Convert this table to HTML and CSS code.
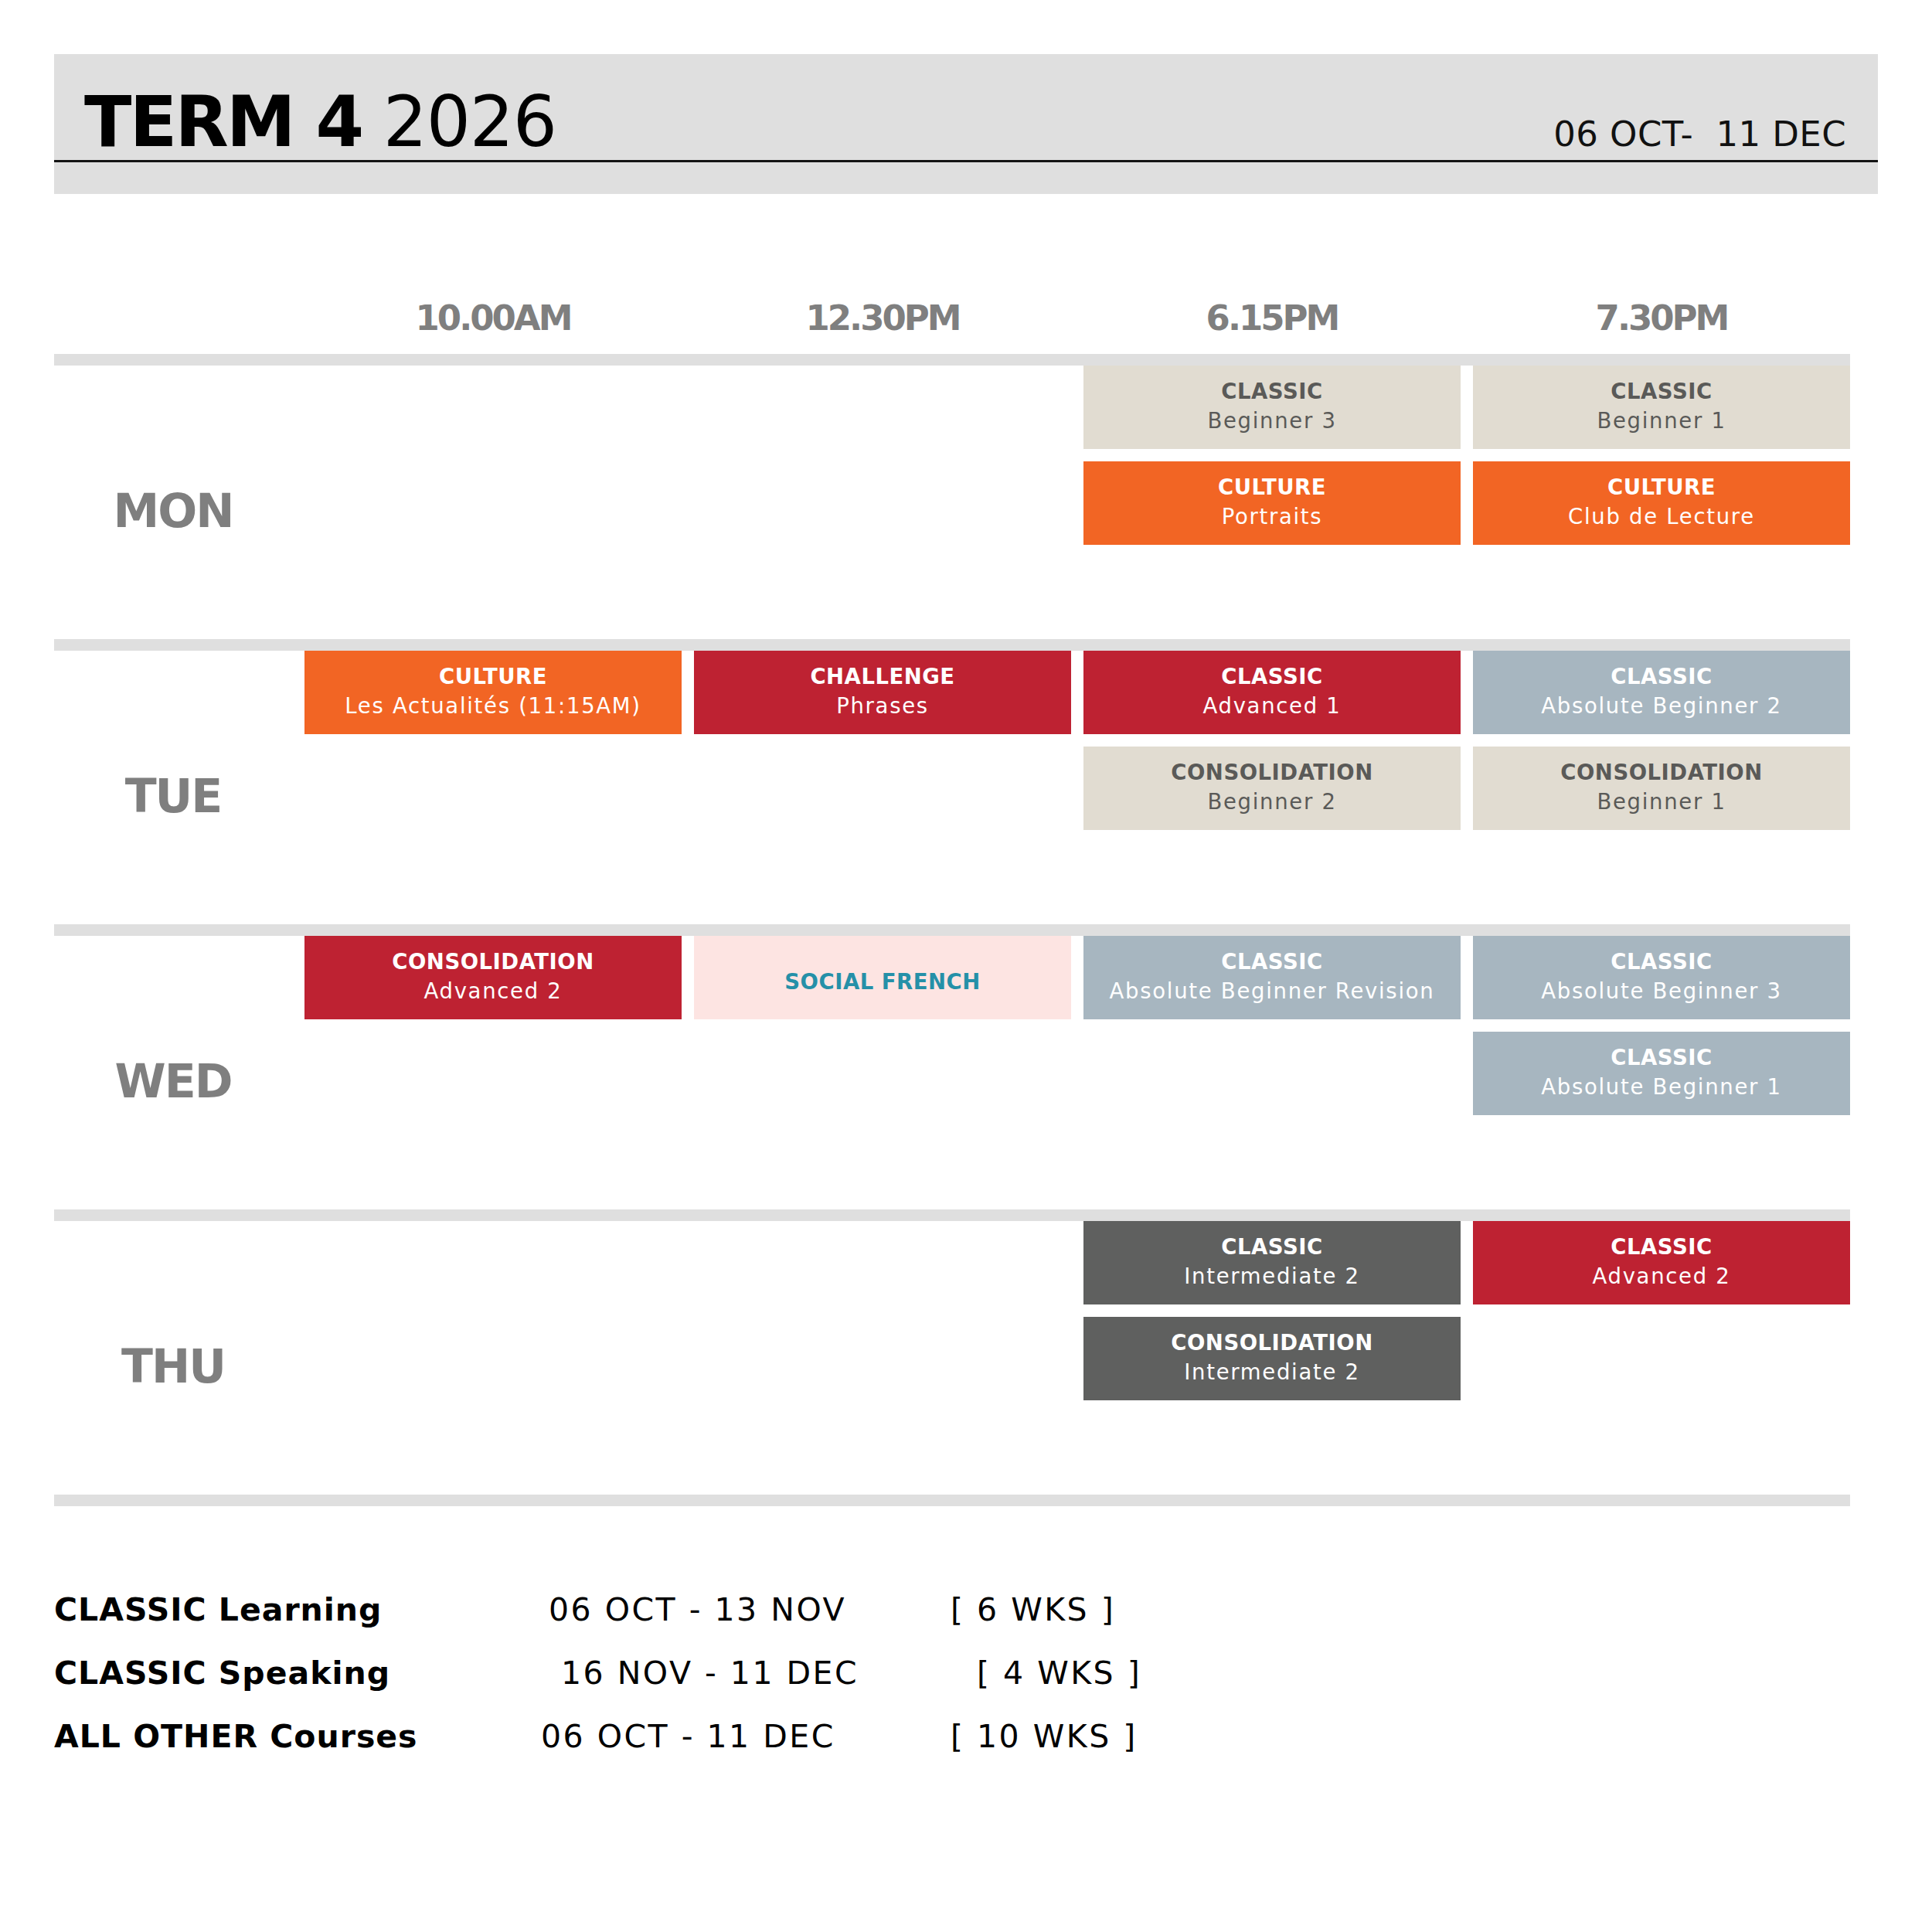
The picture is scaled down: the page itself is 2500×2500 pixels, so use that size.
FILE: index.html
```html
<!DOCTYPE html>
<html lang="en">
<head>
<meta charset="utf-8">
<title>Term 4 2026 Timetable</title>
<link rel="stylesheet" href="styles.css">
</head>
<body>
<div class="page">
  <header class="head">
    <div class="head-top">
      <h1 class="title"><b>TERM 4</b> 2026</h1>
      <div class="range">06 OCT-&nbsp; 11 DEC</div>
    </div>
    <div class="head-foot"></div>
  </header>

  <div class="grid times">
    <div></div>
    <div class="time">10.00AM</div>
    <div class="time">12.30PM</div>
    <div class="time">6.15PM</div>
    <div class="time">7.30PM</div>
  </div>

  <section class="grid day">
    <div class="day-name">MON</div>
    <div class="slot"></div>
    <div class="slot"></div>
    <div class="slot">
      <div class="card beige"><span class="kind">CLASSIC</span><span class="name">Beginner 3</span></div>
      <div class="card orange"><span class="kind">CULTURE</span><span class="name">Portraits</span></div>
    </div>
    <div class="slot">
      <div class="card beige"><span class="kind">CLASSIC</span><span class="name">Beginner 1</span></div>
      <div class="card orange"><span class="kind">CULTURE</span><span class="name">Club de Lecture</span></div>
    </div>
  </section>

  <section class="grid day">
    <div class="day-name">TUE</div>
    <div class="slot">
      <div class="card orange"><span class="kind">CULTURE</span><span class="name">Les Actualités (11:15AM)</span></div>
    </div>
    <div class="slot">
      <div class="card red"><span class="kind">CHALLENGE</span><span class="name">Phrases</span></div>
    </div>
    <div class="slot">
      <div class="card red"><span class="kind">CLASSIC</span><span class="name">Advanced 1</span></div>
      <div class="card beige"><span class="kind">CONSOLIDATION</span><span class="name">Beginner 2</span></div>
    </div>
    <div class="slot">
      <div class="card slate"><span class="kind">CLASSIC</span><span class="name">Absolute Beginner 2</span></div>
      <div class="card beige"><span class="kind">CONSOLIDATION</span><span class="name">Beginner 1</span></div>
    </div>
  </section>

  <section class="grid day">
    <div class="day-name">WED</div>
    <div class="slot">
      <div class="card red"><span class="kind">CONSOLIDATION</span><span class="name">Advanced 2</span></div>
    </div>
    <div class="slot">
      <div class="card pink single"><span class="kind">SOCIAL FRENCH</span></div>
    </div>
    <div class="slot">
      <div class="card slate"><span class="kind">CLASSIC</span><span class="name">Absolute Beginner Revision</span></div>
    </div>
    <div class="slot">
      <div class="card slate"><span class="kind">CLASSIC</span><span class="name">Absolute Beginner 3</span></div>
      <div class="card slate"><span class="kind">CLASSIC</span><span class="name">Absolute Beginner 1</span></div>
    </div>
  </section>

  <section class="grid day">
    <div class="day-name">THU</div>
    <div class="slot"></div>
    <div class="slot"></div>
    <div class="slot">
      <div class="card dark"><span class="kind">CLASSIC</span><span class="name">Intermediate 2</span></div>
      <div class="card dark"><span class="kind">CONSOLIDATION</span><span class="name">Intermediate 2</span></div>
    </div>
    <div class="slot">
      <div class="card red"><span class="kind">CLASSIC</span><span class="name">Advanced 2</span></div>
    </div>
  </section>

  <div class="bar"></div>

  <div class="summary">
    <div class="sum-row">
      <span class="sum-label">CLASSIC Learning</span>
      <span class="sum-dates">06 OCT - 13 NOV</span>
      <span class="sum-weeks">[ 6 WKS ]</span>
    </div>
    <div class="sum-row">
      <span class="sum-label">CLASSIC Speaking</span>
      <span class="sum-dates shift-r">16 NOV - 11 DEC</span>
      <span class="sum-weeks shift-rr">[ 4 WKS ]</span>
    </div>
    <div class="sum-row">
      <span class="sum-label">ALL OTHER Courses</span>
      <span class="sum-dates shift-l">06 OCT - 11 DEC</span>
      <span class="sum-weeks">[ 10 WKS ]</span>
    </div>
  </div>
</div>
</body>
</html>
```

FILE: styles.css
```css
html, body {
  margin: 0;
  padding: 0;
  background: #ffffff;
}

body {
  font-family: "DejaVu Sans", "Liberation Sans", sans-serif;
  color: #000;
}

.page {
  padding: 70px 0 0 70px;
  width: 2360px;
}

/* ---------- header ---------- */
.head {
  width: 2360px;
  background: #dfdfdf;
}

.head-top {
  display: flex;
  justify-content: space-between;
  align-items: baseline;
  padding: 43px 41px 4px 39px;
  border-bottom: 3px solid #141414;
}

.title {
  margin: 0;
  font-size: 90px;
  line-height: 1;
  font-weight: 400;
  letter-spacing: -1.3px;
  color: #000;
}

.title b {
  font-weight: 700;
  letter-spacing: -2.7px;
}

.range {
  font-size: 45px;
  line-height: 1;
  letter-spacing: 0.4px;
  color: #111;
}

.head-foot {
  height: 41px;
}

/* ---------- grid ---------- */
.grid {
  display: grid;
  grid-template-columns: 308px repeat(4, 488px);
  column-gap: 16px;
  width: 2324px;
}

.times {
  margin: 138px 0 24px;
  height: 45px;
}

.time {
  text-align: center;
  font-size: 45px;
  line-height: 1;
  font-weight: 700;
  letter-spacing: -3px;
  color: #7f7f7f;
}

.day {
  box-sizing: border-box;
  height: 369px;
  border-top: 15px solid #dfdfdf;
}

.day-name {
  align-self: center;
  margin-top: 21px;
  text-align: center;
  font-size: 60px;
  line-height: 1;
  font-weight: 700;
  letter-spacing: -2px;
  color: #7f7f7f;
}

.slot {
  display: flex;
  flex-direction: column;
  gap: 16px;
}

.card {
  box-sizing: border-box;
  height: 108px;
  padding-bottom: 5px;
  display: flex;
  flex-direction: column;
  justify-content: center;
  align-items: center;
  font-size: 27.5px;
  line-height: 38px;
  text-align: center;
}

.card.single {
  padding: 9px 0 0;
}

.kind {
  font-weight: 700;
  letter-spacing: 0.5px;
}

.name {
  font-weight: 400;
  letter-spacing: 1.7px;
}

.beige { background: #e1dcd1; color: #5a5a58; }
.orange { background: #f26524; color: #ffffff; }
.red { background: #be2232; color: #ffffff; }
.slate { background: #a7b6c0; color: #ffffff; }
.dark { background: #5f605f; color: #ffffff; }
.pink { background: #fde4e2; color: #2590a8; }

.bar {
  width: 2324px;
  height: 15px;
  background: #dfdfdf;
}

/* ---------- summary ---------- */
.summary {
  margin-top: 93px;
}

.sum-row {
  display: grid;
  grid-template-columns: 640px 520px auto;
  font-size: 41px;
  line-height: 82px;
  white-space: nowrap;
}

.sum-label {
  font-weight: 700;
  letter-spacing: 1px;
}

.sum-dates,
.sum-weeks {
  font-weight: 400;
  letter-spacing: 2.5px;
}

.shift-r { padding-left: 16px; }
.shift-rr { padding-left: 34px; }
.shift-l { margin-left: -10px; }
```
